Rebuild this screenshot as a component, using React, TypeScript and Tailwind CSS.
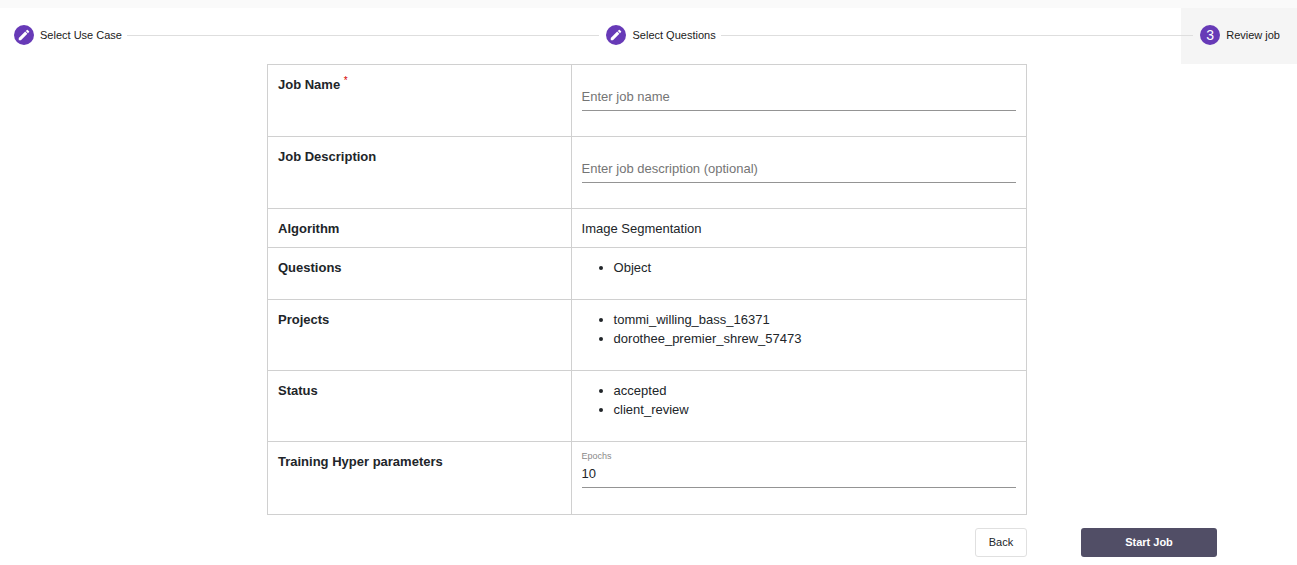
import React, { useState } from 'react';
import { MdCreate } from 'react-icons/md';

const STEPS = [
  { label: 'Select Use Case', done: true },
  { label: 'Select Questions', done: true },
  { label: 'Review job', done: false },
];

const QUESTIONS = ['Object'];
const PROJECTS = ['tommi_willing_bass_16371', 'dorothee_premier_shrew_57473'];
const STATUSES = ['accepted', 'client_review'];

const inputClass =
  'block w-full h-6 pb-1 bg-transparent border-b border-[#949494] text-[13px] leading-5 text-[#212529] placeholder:text-[#757575] outline-none focus:border-[#673ab7]';

function Stepper({ active, onSelect }: { active: number; onSelect: (i: number) => void }) {
  return (
    <nav aria-label="Job steps" className="flex items-center bg-white">
      {STEPS.map((step, i) => (
        <React.Fragment key={step.label}>
          {i > 0 && <div className="relative flex-1 -mx-3 h-0.5 border-t border-[#dedede]" />}
          <button
            type="button"
            onClick={() => onSelect(i)}
            aria-current={active === i ? 'step' : undefined}
            className={`flex items-center gap-1.5 h-14 pb-0.5 pr-[17px] text-[11px] text-[#212121] cursor-pointer ${
              i === 0 ? 'pl-3.5' : 'pl-[19px]'
            } ${active === i ? 'bg-[#f5f5f5]' : 'bg-white'}`}
          >
            <span className="flex items-center justify-center size-5 rounded-full bg-[#673ab7] text-white text-sm leading-none">
              {step.done ? <MdCreate className="size-[14px]" /> : i + 1}
            </span>
            <span className="whitespace-nowrap">{step.label}</span>
          </button>
        </React.Fragment>
      ))}
    </nav>
  );
}

function Row({ label, children }: { label: React.ReactNode; children: React.ReactNode }) {
  return (
    <tr>
      <th scope="row" className="w-2/5 border border-[#d0d0d0] px-2.5 pt-2.5 pb-[9px] text-left align-top font-bold">
        {label}
      </th>
      <td className="border border-[#d0d0d0] px-2.5 pt-2.5 pb-[9px] align-top">{children}</td>
    </tr>
  );
}

function BulletList({ items }: { items: string[] }) {
  return (
    <ul className="mb-[13px] list-disc pl-8">
      {items.map((item) => (
        <li key={item}>{item}</li>
      ))}
    </ul>
  );
}

export default function App() {
  const [active, setActive] = useState(2);
  const [name, setName] = useState('');
  const [description, setDescription] = useState('');
  const [epochs, setEpochs] = useState('10');

  return (
    <div className="min-h-screen bg-white pt-2 font-['Liberation_Sans',Arial,sans-serif] text-[#212529] shadow-[inset_0_8px_0_#fafafa]">
      <Stepper active={active} onSelect={setActive} />

      <form onSubmit={(e) => e.preventDefault()}>
        <div className="pr-[3px]">
          <table className="mx-auto w-full max-w-[760px] table-fixed border-collapse text-[13px] leading-[19px]">
            <tbody>
              <Row
                label={
                  <label htmlFor="job-name">
                    Job Name <sup className="text-[10px] font-normal text-[#d50000]">*</sup>
                  </label>
                }
              >
                <div className="pt-3 pb-4">
                  <input
                    id="job-name"
                    className={inputClass}
                    placeholder="Enter job name"
                    required
                    value={name}
                    onChange={(e) => setName(e.target.value)}
                  />
                </div>
              </Row>
              <Row label={<label htmlFor="job-description">Job Description</label>}>
                <div className="pt-3 pb-4">
                  <input
                    id="job-description"
                    className={inputClass}
                    placeholder="Enter job description (optional)"
                    value={description}
                    onChange={(e) => setDescription(e.target.value)}
                  />
                </div>
              </Row>
              <Row label="Algorithm">Image Segmentation</Row>
              <Row label="Questions">
                <BulletList items={QUESTIONS} />
              </Row>
              <Row label="Projects">
                <BulletList items={PROJECTS} />
              </Row>
              <Row label="Status">
                <BulletList items={STATUSES} />
              </Row>
              <Row label="Training Hyper parameters">
                <div className="-mt-0.5 pb-[17px]">
                  <label htmlFor="epochs" className="mb-0.5 block text-[9px] leading-3 text-[#8a8a8a]">
                    Epochs
                  </label>
                  <input
                    id="epochs"
                    className={inputClass}
                    inputMode="numeric"
                    value={epochs}
                    onChange={(e) => setEpochs(e.target.value)}
                  />
                </div>
              </Row>
            </tbody>
          </table>
        </div>

        <div className="flex justify-end gap-[54px] pt-[13px] pr-20 text-[11px]">
          <button
            type="button"
            onClick={() => setActive(1)}
            className="h-[29px] w-[52px] rounded-[3px] border border-[#e0e0e0] bg-white cursor-pointer"
          >
            Back
          </button>
          <button
            type="submit"
            className="h-[29px] w-[136px] rounded-[3px] bg-[#514e66] font-bold text-white cursor-pointer"
          >
            Start Job
          </button>
        </div>
      </form>
    </div>
  );
}
